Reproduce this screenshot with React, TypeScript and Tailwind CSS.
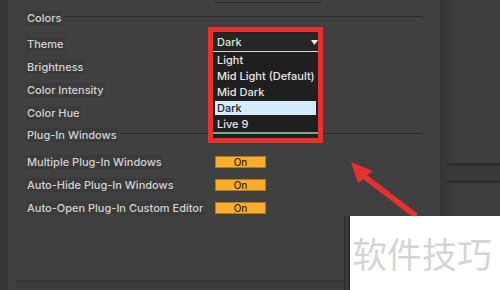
import React from "react";

const FONT = { fontFamily: "Inter, 'Noto Sans', sans-serif" };

function Label({ children }: { children: React.ReactNode }) {
  return (
    <span className="bg-[#3b3b3b] px-[1px] text-[11px] font-medium leading-[14px] text-[#d2d2d2] whitespace-nowrap">
      {children}
    </span>
  );
}

function Row({ label, on }: { label: string; on?: boolean }) {
  return (
    <div className="flex h-[23px] items-center">
      <div className="flex w-[189px] shrink-0 items-center">
        <Label>{label}</Label>
      </div>
      {on && (
        <div className="flex h-[12px] w-[51px] items-center justify-center border border-[#b87a10] bg-[#f9ad2c] text-[10px] font-medium leading-none text-[#3a2600]">
          On
        </div>
      )}
    </div>
  );
}

function Header({ label }: { label: string }) {
  return (
    <div className="flex items-center">
      <Label>{label}</Label>
      <div className="mb-[3px] ml-[2px] h-[1px] flex-1 bg-[#2c2c2c]" />
    </div>
  );
}

export default function App() {
  const items = ["Light", "Mid Light (Default)", "Mid Dark", "Dark", "Live 9"];
  return (
    <div className="relative flex h-[290px] w-[500px] overflow-hidden bg-[#404040]" style={FONT}>
      {/* left strip */}
      <div className="w-[8px] shrink-0 bg-[#363636]" />
      {/* main panel */}
      <div className="flex w-[432px] shrink-0 flex-col bg-[#404040] pl-[18px] pr-[17px]">
        <div className="ml-[189px] mt-[2px] h-[1px] w-[106px] bg-[#2a2a2a]" />
        <div className="mt-[7px] flex h-[16px] items-center">
          <div className="flex-1">
            <Header label="Colors" />
          </div>
        </div>
        <div className="mt-[6px]">
          <Row label="Theme" />
          <Row label="Brightness" />
          <Row label="Color Intensity" />
          <Row label="Color Hue" />
        </div>
        <div className="flex h-[22px] items-center">
          <div className="flex-1">
            <Header label="Plug-In Windows" />
          </div>
        </div>
        <div className="mt-[4px]">
          <Row label="Multiple Plug-In Windows" on />
          <Row label="Auto-Hide Plug-In Windows" on />
          <Row label="Auto-Open Plug-In Custom Editor" on />
        </div>
        <div className="-ml-[10px] mt-auto mb-[2px] h-[8px] border-t-2 border-[#333333] bg-[#3b3b3b]" />
      </div>
      {/* dark band */}
      <div className="w-[12px] shrink-0 bg-gradient-to-r from-[#353535] to-[#3b3b3b]" />
      {/* right panel */}
      <div className="flex flex-1 flex-col bg-[#3e3e3e]">
        <div className="-ml-[5px] mt-[163px] h-[20px] border-y-[3px] border-[#2e2e2e] bg-[#3a3a3a]" />
      </div>

      {/* open dropdown with red annotation frame */}
      <div className="absolute left-[208px] top-[27px] w-[115px] border-[5px] border-[#e8302f] bg-[#1f1f1f]">
        <div className="pt-[1px]">
          <div className="flex h-[18px] items-center justify-between bg-[#262626] pl-[4px]">
            <span className="text-[11px] font-medium text-[#d4e6cc]">Dark</span>
            <svg width="7" height="5" viewBox="0 0 7 5" className="mt-[1px]">
              <path d="M0 0 H7 L3.5 5 Z" fill="#f0f0f0" />
            </svg>
          </div>
          <div className="h-[1px] bg-[#d6d6d6]" />
          <div className="px-[2px]">
            {items.map((it) => (
              <div key={it} className="flex h-[16px] items-center">
                <div
                  className={
                    it === "Dark"
                      ? "flex h-[14px] w-full items-center bg-[#d3ebfb] pl-[2px] text-[11px] font-medium text-[#222222]"
                      : "flex h-[14px] w-full items-center pl-[2px] text-[11px] font-medium text-[#e6e6e6] whitespace-nowrap"
                  }
                >
                  {it}
                </div>
              </div>
            ))}
          </div>
          <div className="h-[2px] bg-[#6da98a]" />
          <div className="h-[4px]" />
        </div>
      </div>

      {/* red arrow */}
      <svg className="pointer-events-none absolute left-0 top-0" width="500" height="290" viewBox="0 0 500 290">
        <polygon points="351,162 373,171 367,175 418,214 414,218 363,179 358,183" fill="#e8302f" />
      </svg>

      {/* watermark */}
      <div className="absolute left-[344px] top-[216px] flex h-[74px] w-[156px]">
        <div className="w-[2px] bg-[#313131]" />
        <div className="w-[2px] bg-[#3c3c3c]" />
        <div className="w-[2px] bg-[#2f2f2f]" />
        <div className="flex-1 bg-white pl-[2px] pt-[19px]">
          <span
            className="text-[35px] leading-none text-[#d5d5d5] whitespace-nowrap"
            style={{ fontFamily: "'Noto Sans CJK SC', sans-serif" }}
          >
            软件技巧
          </span>
        </div>
      </div>
    </div>
  );
}
